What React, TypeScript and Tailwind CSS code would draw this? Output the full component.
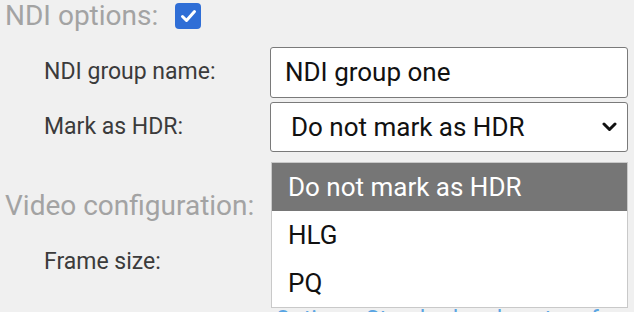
import React from 'react'

const OPTIONS = ['Do not mark as HDR', 'HLG', 'PQ']

const Chevron = () => (
  <svg width="15" height="10" viewBox="0 0 15 10" className="shrink-0">
    <path d="M2 2 L7.5 7.5 L13 2" fill="none" stroke="#111" strokeWidth="3" strokeLinecap="round" strokeLinejoin="round" />
  </svg>
)

const Checkbox = () => (
  <div className="w-[26px] h-[26px] rounded-[4px] bg-[#2f6ed6] flex items-center justify-center">
    <svg width="17" height="14" viewBox="0 0 17 14">
      <path d="M2.5 7.5 L6.5 11.5 L14.5 2.5" fill="none" stroke="#fff" strokeWidth="3" strokeLinecap="round" strokeLinejoin="round" />
    </svg>
  </div>
)

export default function App() {
  return (
    <div
      className="w-[634px] h-[312px] overflow-hidden bg-[#f0f0f0]"
      style={{ fontFamily: 'Roboto, "Liberation Sans", sans-serif' }}
    >
      {/* NDI section */}
      <div className="flex items-center gap-[17px] pl-[5px] -mt-px h-[33px]">
        <span className="text-[28px] leading-[33px] text-[#a3a3a3]">NDI options:</span>
        <Checkbox />
      </div>

      <div className="mt-[15px] flex flex-col gap-[4px]">
        <div className="flex items-center pl-[44px]">
          <span className="w-[226px] text-[23px] text-[#3b3b3b]">NDI group name:</span>
          <div className="w-[358px] h-[51px] border border-[#7a7a7a] rounded-[3px] bg-white flex items-center pl-[14px]">
            <span className="text-[26px] text-[#111]">NDI group one</span>
          </div>
        </div>

        <div className="flex items-center pl-[44px]">
          <span className="w-[226px] text-[23px] text-[#3b3b3b]">Mark as HDR:</span>
          <div className="relative">
            <div className="w-[358px] h-[50px] border border-[#7a7a7a] rounded-[3px] bg-white flex items-center justify-between pl-[20px] pr-[10px]">
              <span className="text-[26px] text-[#111]">Do not mark as HDR</span>
              <Chevron />
            </div>

            {/* open option list */}
            <div className="absolute z-10 top-[60px] left-px w-[357px] border border-[#c9c9c9] bg-white flex flex-col">
              {OPTIONS.map((o, i) => (
                <div
                  key={o}
                  className={`h-[48px] flex items-center pl-[16px] text-[26px] ${
                    i === 0 ? 'bg-[#767676] text-white' : 'text-[#111]'
                  }`}
                >
                  {o}
                </div>
              ))}
            </div>
          </div>
        </div>
      </div>

      {/* Video section */}
      <div className="mt-[37px] pl-[5px] h-[33px]">
        <span className="text-[28px] leading-[33px] text-[#a3a3a3]">Video configuration:</span>
      </div>

      <div className="mt-[15px] flex items-center pl-[44px]">
        <span className="w-[226px] text-[23px] text-[#3b3b3b]">Frame size:</span>
        <div className="w-[358px] h-[50px]" />
      </div>

      <div className="mt-[19px] pl-[275px] text-[23px] leading-[27px] text-[#5aa5e3] whitespace-nowrap">
        Options: Standard and custom frame sizes
      </div>
    </div>
  )
}
